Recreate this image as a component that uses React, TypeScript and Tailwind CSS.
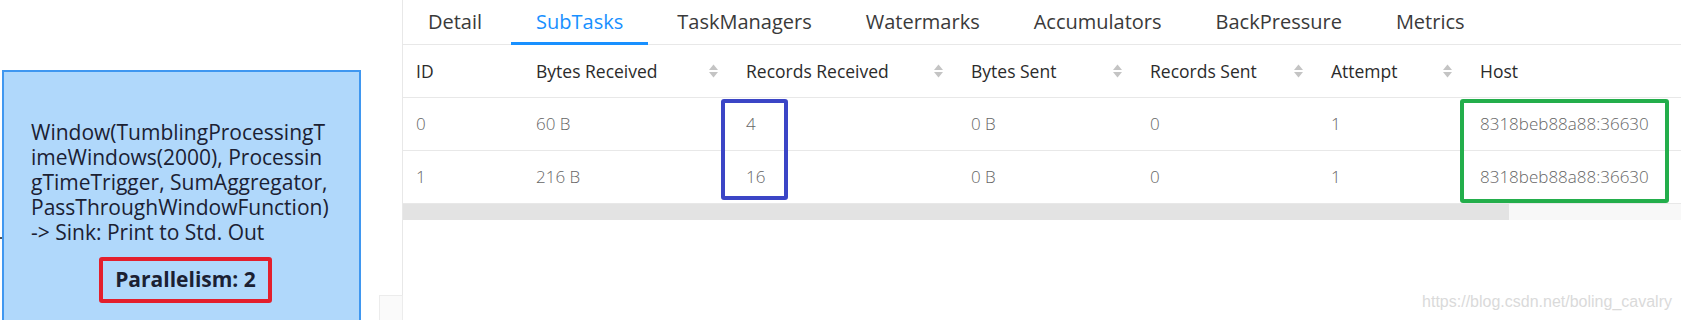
const tabs = ["Detail", "SubTasks", "TaskManagers", "Watermarks", "Accumulators", "BackPressure", "Metrics"];

const columns = [
  { title: "ID", w: "w-[120px]", sort: false },
  { title: "Bytes Received", w: "w-[210px]", sort: true },
  { title: "Records Received", w: "w-[225px]", sort: true },
  { title: "Bytes Sent", w: "w-[179px]", sort: true },
  { title: "Records Sent", w: "w-[181px]", sort: true },
  { title: "Attempt", w: "w-[149px]", sort: true },
  { title: "Host", w: "flex-1", sort: false },
];

const rows = [
  ["0", "60 B", "4", "0 B", "0", "1", "8318beb88a88:36630"],
  ["1", "216 B", "16", "0 B", "0", "1", "8318beb88a88:36630"],
];

const nodeLines = [
  "Window(TumblingProcessingT",
  "imeWindows(2000), Processin",
  "gTimeTrigger, SumAggregator,",
  "PassThroughWindowFunction)",
  "-> Sink: Print to Std. Out",
];

function SortIcon() {
  return (
    <svg width="11" height="16" viewBox="0 0 11 16" className="shrink-0">
      <path d="M5.5 1.5 L10 7 H1 Z" fill="#c4c4c4" />
      <path d="M5.5 14.5 L10 9 H1 Z" fill="#c4c4c4" />
    </svg>
  );
}

export default function App() {
  return (
    <div className="relative flex w-[1681px] h-[320px] overflow-hidden bg-white font-['Open_Sans',sans-serif]">
      {/* graph canvas */}
      <div className="relative w-[402px] h-full shrink-0">
        <div className="absolute left-0 top-[237px] w-[3px] h-[2px] bg-[#555]" />
        <div className="absolute left-[2px] top-[70px] w-[359px] h-[270px] bg-[#b0d8fb] border-2 border-[#3f97f0] pt-[48px] pl-[27px] text-[#1b2133]">
          <div className="text-[21px] leading-[25px] whitespace-nowrap">
            {nodeLines.map((l) => (
              <div key={l}>{l}</div>
            ))}
          </div>
          <div className="mt-[12px] ml-[68px] w-[173px] h-[46px] border-4 border-[#e31f2c] rounded-[3px] flex items-center justify-center text-[21px] font-bold">
            Parallelism: 2
          </div>
        </div>
        <div className="absolute left-[379px] top-[295px] w-[24px] h-[30px] bg-[#fafafa] border border-[#ececec]" />
      </div>

      {/* detail panel */}
      <div className="flex-1 flex flex-col border-l border-[#e8e8e8]">
        <div className="h-[45px] flex items-stretch gap-[4px] border-b border-[#e8e8e8]">
          {tabs.map((t) => (
            <div
              key={t}
              className={`px-[25px] flex items-center text-[20px] -mb-px pt-[1px] ${
                t === "SubTasks" ? "text-[#1890ff] border-b-[3px] border-[#1890ff]" : "text-[#3a3a3a] border-b-[3px] border-transparent"
              }`}
            >
              {t}
            </div>
          ))}
        </div>

        <div className="h-[53px] flex border-b border-[#e8e8e8] text-[17.5px] text-[#2b2b2b]">
          {columns.map((c) => (
            <div key={c.title} className={`${c.w} shrink-0 flex items-center justify-between pl-[13px] pr-[14px]`}>
              <span>{c.title}</span>
              {c.sort && <SortIcon />}
            </div>
          ))}
        </div>

        {rows.map((r, i) => (
          <div key={i} className="h-[53px] flex border-b border-[#e8e8e8] text-[17px] text-[#666] font-light">
            {r.map((v, j) => (
              <div key={j} className={`${columns[j].w} shrink-0 flex items-center pl-[13px]`}>
                {v}
              </div>
            ))}
          </div>
        ))}

        <div className="h-[16px] flex bg-[#f8f8f8]">
          <div className="w-[1106px] h-full bg-[#e3e3e3]" />
        </div>
      </div>

      {/* annotations */}
      <div className="absolute left-[721px] top-[99px] w-[67px] h-[101px] border-4 border-[#3b45c6] rounded-[3px]" />
      <div className="absolute left-[1460px] top-[99px] w-[209px] h-[104px] border-4 border-[#23ae4b] rounded-[3px]" />

      <div className="absolute right-[9px] top-[290px] text-[16px] text-[#dadada] font-['Liberation_Sans',sans-serif]">
        https://blog.csdn.net/boling_cavalry
      </div>
    </div>
  );
}
